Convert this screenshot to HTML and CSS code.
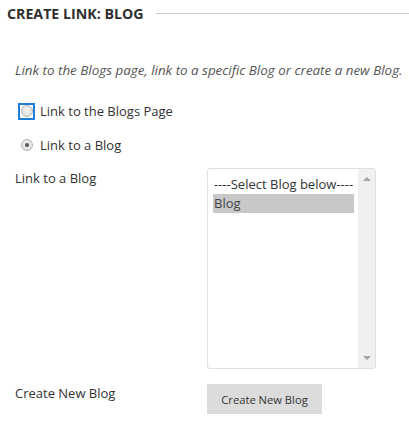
FILE: index.html
```html
<!DOCTYPE html>
<html>
<head>
<meta charset="utf-8">
<link rel="stylesheet" href="styles.css">
</head>
<body>
<div class="page">
  <div class="heading">
    <h2 class="title">CREATE LINK: BLOG</h2>
    <span class="rule"></span>
  </div>
  <p class="instructions">Link to the Blogs page, link to a specific Blog or create a new Blog.</p>
  <div class="radios">
    <label class="radio-row">
      <span class="radio-focus"><span class="radio"></span></span>
      <span class="radio-label">Link to the Blogs Page</span>
    </label>
    <label class="radio-row">
      <span class="radio-plain"><span class="radio checked"></span></span>
      <span class="radio-label">Link to a Blog</span>
    </label>
  </div>
  <div class="field-row">
    <div class="field-label">Link to a Blog</div>
    <div class="listbox">
      <div class="options">
        <div class="option">----Select Blog below----</div>
        <div class="option selected">Blog</div>
      </div>
      <div class="scrollbar">
        <span class="arrow up"></span>
        <span class="arrow down"></span>
      </div>
    </div>
  </div>
  <div class="field-row button-row">
    <div class="field-label">Create New Blog</div>
    <button class="btn">Create New Blog</button>
  </div>
</div>
</body>
</html>
```

FILE: styles.css
```css
html, body {
  margin: 0;
  padding: 0;
  background: #fff;
}
body {
  font-family: "Open Sans", "Liberation Sans", sans-serif;
  color: #333;
  width: 409px;
  height: 428px;
  overflow: hidden;
}
.page {
  padding: 0 0 0 7px;
}
.heading {
  display: flex;
  align-items: center;
  height: 26px;
  gap: 12px;
}
.title {
  margin: 0;
  font-size: 14.2px;
  font-weight: 700;
  color: #2f2f2f;
  white-space: nowrap;
}
.rule {
  flex: 1;
  height: 1px;
  background: #c8c8c8;
  margin-top: 1px;
}
.instructions {
  margin: 35px 0 0 8px;
  font-style: italic;
  font-size: 13.4px;
  color: #555;
  line-height: 19px;
  white-space: nowrap;
}
.radios {
  margin-top: 22px;
  margin-left: 11px;
  display: flex;
  flex-direction: column;
  gap: 16px;
}
.radio-row {
  display: flex;
  align-items: center;
  height: 18px;
  font-size: 13px;
  color: #333;
}
.radio-focus {
  width: 13px;
  height: 13px;
  border: 2px solid #1b7fd8;
  display: flex;
  align-items: center;
  justify-content: center;
  margin-right: 5px;
}
.radio-plain {
  width: 17px;
  height: 17px;
  display: flex;
  align-items: center;
  justify-content: center;
  margin-right: 5px;
}
.radio {
  width: 12px;
  height: 12px;
  border-radius: 50%;
  border: 1px solid #b5b5b5;
  background: radial-gradient(circle at 50% 40%, #f4f4f4, #d8d8d8);
  box-sizing: border-box;
  position: relative;
}
.radio.checked::after {
  content: "";
  position: absolute;
  left: 3px;
  top: 3px;
  width: 4px;
  height: 4px;
  border-radius: 50%;
  background: #555;
}
.field-row {
  display: flex;
  margin-top: 14px;
  margin-left: 8px;
}
.field-label {
  width: 192px;
  font-size: 13px;
  color: #333;
  line-height: 18px;
  padding-top: 1px;
}
.listbox {
  width: 169px;
  height: 201px;
  border: 1px solid #e0e0e0;
  border-radius: 3px;
  display: flex;
  box-sizing: border-box;
  overflow: hidden;
}
.options {
  flex: 1;
  padding: 6px 4px 0 5px;
}
.option {
  font-size: 13px;
  line-height: 19px;
  color: #333;
  padding-left: 1px;
  white-space: nowrap;
}
.option.selected {
  background: #c8c8c8;
  color: #444;
}
.scrollbar {
  width: 17px;
  background: #f0f0f0;
  position: relative;
}
.arrow {
  position: absolute;
  left: 5px;
  width: 0;
  height: 0;
  border-left: 4px solid transparent;
  border-right: 4px solid transparent;
}
.arrow.up {
  top: 8px;
  border-bottom: 4px solid #a3a3a3;
}
.arrow.down {
  bottom: 8px;
  border-top: 4px solid #a3a3a3;
}
.button-row {
  margin-top: 15px;
  align-items: flex-start;
}
.button-row .field-label {
  padding-top: 0;
}
.btn {
  font-family: "Open Sans", "Liberation Sans", sans-serif;
  font-size: 11.2px;
  color: #333;
  background: #dcdcdc;
  border: none;
  width: 115px;
  height: 30px;
  padding: 0;
}
```
